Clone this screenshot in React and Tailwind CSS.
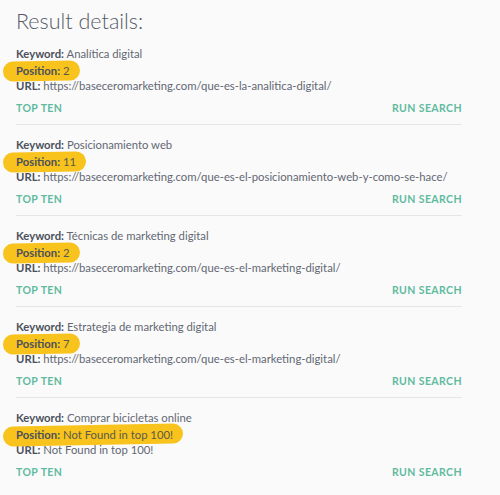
import React from "react";

const items = [
  { k: "Analítica digital", p: "2", u: "https://baseceromarketing.com/que-es-la-analitica-digital/" },
  { k: "Posicionamiento web", p: "11", u: "https://baseceromarketing.com/que-es-el-posicionamiento-web-y-como-se-hace/" },
  { k: "Técnicas de marketing digital", p: "2", u: "https://baseceromarketing.com/que-es-el-marketing-digital/" },
  { k: "Estrategia de marketing digital", p: "7", u: "https://baseceromarketing.com/que-es-el-marketing-digital/" },
  { k: "Comprar bicicletas online", p: "Not Found in top 100!", u: "Not Found in top 100!" },
];

export default function App() {
  return (
    <div className="w-[500px] h-[495px] overflow-hidden bg-[#fafafa] text-[#626773]" style={{ fontFamily: "Lato, 'Open Sans', sans-serif" }}>
      <div className="w-[446px] ml-4">
        <h1 className="h-[34px] pt-[7px] text-[21.5px] leading-[28px] text-[#555a66] font-light">Result details:</h1>
        {items.map((it, i) => (
          <div key={i} className={"pt-[12px] pb-[7px] " + (i < items.length - 1 ? "border-b border-[#e6e6e6]" : "")}>
            <div className="text-[11.3px] leading-[16px] whitespace-nowrap">
              <div><span className="font-bold text-[#4b505c]">Keyword:</span> {it.k}</div>
              <div className="pt-[1px]">
                <span className="relative inline-block">
                  <span className="absolute left-[-13px] right-[-10px] top-[-2px] bottom-[-2px] rounded-full bg-[#f8c31c] -rotate-1" />
                  <span className="relative"><span className="font-bold text-[#4b505c]">Position:</span> <span className="text-[#5b5a4a]">{it.p}</span></span>
                </span>
              </div>
              <div className="-mt-[1px]"><span className="font-bold text-[#4b505c]">URL:</span> {it.u}</div>
            </div>
            <div className="mt-[7px] h-[16px] flex justify-between items-center text-[10.5px] font-bold tracking-[0.04em] text-[#5fba9f]">
              <span>TOP TEN</span>
              <span>RUN SEARCH</span>
            </div>
          </div>
        ))}
      </div>
    </div>
  );
}
